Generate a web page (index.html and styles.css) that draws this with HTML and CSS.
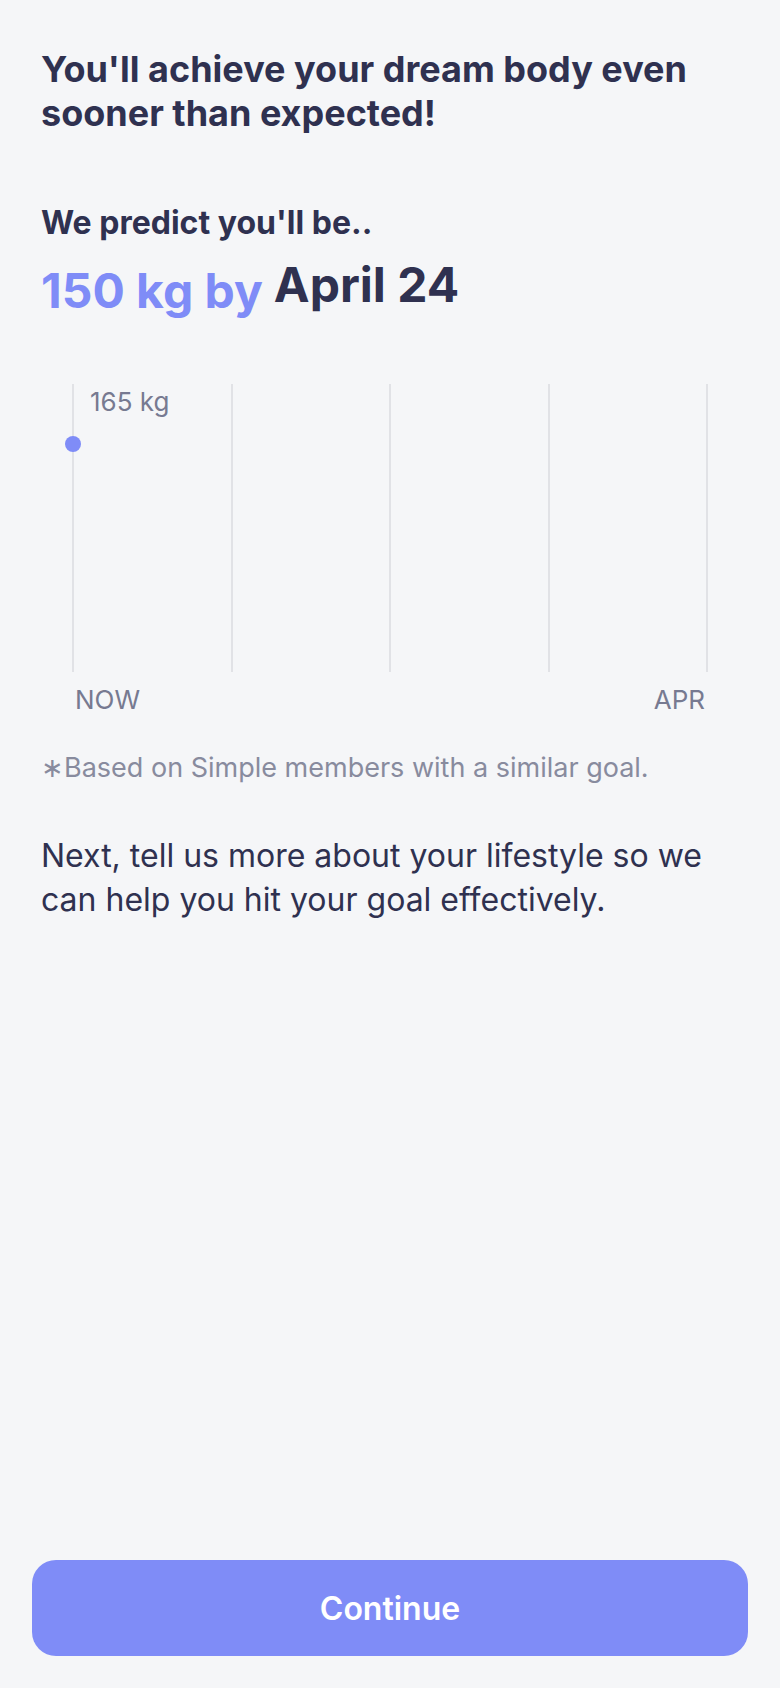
FILE: index.html
```html
<!DOCTYPE html>
<html lang="en">
<head>
<meta charset="utf-8">
<title>Prediction</title>
<link rel="stylesheet" href="styles.css">
</head>
<body>
<main class="screen">
  <h1 class="title">You'll achieve your dream body even sooner than expected!</h1>
  <h2 class="subtitle">We predict you'll be..</h2>
  <div class="prediction">
    <span class="weight">150 kg by</span>
    <span class="date">April 24</span>
  </div>
  <div class="chart">
    <div class="grid">
      <div class="col"></div>
      <div class="col"></div>
      <div class="col"></div>
      <div class="col last"></div>
    </div>
    <span class="point"></span>
    <span class="point-label">165 kg</span>
  </div>
  <div class="axis">
    <span>NOW</span>
    <span>APR</span>
  </div>
  <p class="note">∗Based on Simple members with a similar goal.</p>
  <p class="body">Next, tell us more about your lifestyle so we can help you hit your goal effectively.</p>
  <button class="continue" type="button">Continue</button>
</main>
</body>
</html>
```

FILE: styles.css
```css
html, body {
  margin: 0;
  padding: 0;
  background: #f5f6f8;
}
body {
  font-family: Inter, "Noto Sans", sans-serif;
  color: #2f3150;
}
.screen {
  min-height: 1688px;
  box-sizing: border-box;
  display: flex;
  flex-direction: column;
  padding: 47px 41px 32px;
}
.title {
  margin: 0;
  font-size: 36px;
  line-height: 44px;
  font-weight: 700;
}
.subtitle {
  margin: 68px 0 0;
  font-size: 32px;
  line-height: 40px;
  font-weight: 700;
}
.prediction {
  display: flex;
  align-items: flex-start;
  gap: 11px;
  margin-top: 17px;
}
.weight {
  font-size: 48px;
  line-height: 62px;
  font-weight: 700;
  color: #7f8cf7;
}
.date {
  font-size: 48px;
  line-height: 50px;
  font-weight: 700;
  color: #2f3150;
}
.chart {
  position: relative;
  margin: 62px 0 0 31px;
  width: 636px;
  height: 288px;
}
.grid {
  display: flex;
  height: 100%;
}
.col {
  flex: 1;
  border-left: 2px solid #e1e2e6;
}
.col.last {
  border-right: 2px solid #e1e2e6;
}
.point {
  position: absolute;
  left: -7px;
  top: 52px;
  width: 16px;
  height: 16px;
  border-radius: 50%;
  background: #7f8cf7;
}
.point-label {
  position: absolute;
  left: 18px;
  top: 2px;
  font-size: 26px;
  line-height: 32px;
  color: #777a91;
}
.axis {
  display: flex;
  justify-content: space-between;
  margin: 12px 0 0 34px;
  width: 630px;
  font-size: 26px;
  line-height: 32px;
  color: #777a91;
}
.note {
  margin: 35px 0 0;
  font-size: 27px;
  line-height: 34px;
  color: #888b9e;
}
.body {
  margin: 49px 0 0;
  font-size: 32px;
  line-height: 44px;
  color: #2f3150;
}
.continue {
  margin-top: auto;
  margin-left: -9px;
  margin-right: -9px;
  height: 96px;
  border: 0;
  border-radius: 24px;
  background: #7f8cf7;
  color: #ffffff;
  font-family: Inter, "Noto Sans", sans-serif;
  font-size: 32px;
  font-weight: 600;
}
```
